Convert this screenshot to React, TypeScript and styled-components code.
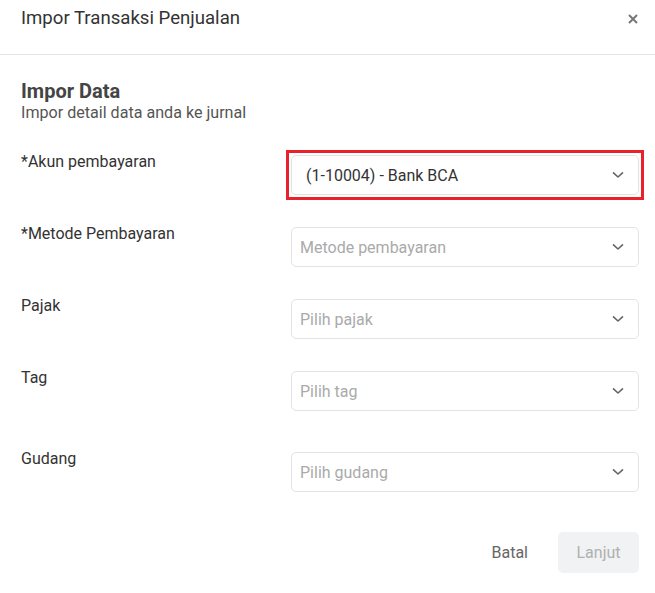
import React from "react";
import styled, { createGlobalStyle } from "styled-components";

const Global = createGlobalStyle`
  html, body { margin: 0; padding: 0; background: #ffffff; }
  body { font-family: Roboto, "Liberation Sans", Arial, sans-serif; color: #333; }
  * { box-sizing: border-box; }
`;

const Modal = styled.div`
  width: 655px;
  min-height: 593px;
  background: #fff;
  display: flex;
  flex-direction: column;
`;

const Header = styled.div`
  height: 55px;
  padding: 6px 15px 0 21px;
  border-bottom: 1px solid #e5e5e5;
  display: flex;
  align-items: flex-start;
  justify-content: space-between;
`;

const Title = styled.h1`
  margin: 0;
  font-size: 18.6px;
  line-height: 24px;
  font-weight: 400;
  color: #333;
`;

const CloseButton = styled.button`
  border: 0;
  background: transparent;
  padding: 0;
  margin-top: 6px;
  width: 14px;
  height: 14px;
  display: flex;
  align-items: center;
  justify-content: center;
  color: #777;
  cursor: pointer;
`;

const Body = styled.div`
  padding: 24px 16px 0 21px;
  display: flex;
  flex-direction: column;
`;

const SectionTitle = styled.h2`
  margin: 0;
  font-size: 20px;
  line-height: 24px;
  font-weight: 700;
  color: #444;
`;

const SectionSub = styled.p`
  margin: 0;
  font-size: 16.1px;
  line-height: 20px;
  color: #555;
`;

const Form = styled.div`
  margin-top: 32px;
  display: flex;
  flex-direction: column;
`;

const Row = styled.div<{ $gap: number }>`
  display: grid;
  grid-template-columns: 270px 1fr;
  align-items: start;
  margin-bottom: ${(p) => p.$gap}px;
`;

const Label = styled.label`
  font-size: 16px;
  line-height: 24px;
  margin-top: -5px;
  color: #333;
`;

const Highlight = styled.div`
  margin: -5px;
  padding: 2px;
  border: 3px solid #e8212b;
`;

const Select = styled.div<{ $filled?: boolean }>`
  height: 40px;
  border: 1px solid #e3e3e3;
  border-radius: 5px;
  display: flex;
  align-items: center;
  justify-content: space-between;
  padding: 0 14px 0 ${(p) => (p.$filled ? 14 : 8)}px;
  font-size: 16px;
  color: ${(p) => (p.$filled ? "#333" : "#aaa")};
  background: #fff;
`;

const Chevron = () => (
  <svg width="12" height="8" viewBox="0 0 12 8" fill="none">
    <path d="M1.5 1.8 L6 6 L10.5 1.8" stroke="#666" strokeWidth="1.6" strokeLinecap="round" strokeLinejoin="round" />
  </svg>
);

const Footer = styled.div`
  display: flex;
  justify-content: flex-end;
  align-items: center;
  gap: 14px;
`;

const GhostButton = styled.button`
  border: 0;
  background: transparent;
  font-family: inherit;
  font-size: 16px;
  color: #666;
  height: 41px;
  padding: 0 16px;
`;

const PrimaryButton = styled.button`
  border: 0;
  border-radius: 5px;
  background: #f1f2f4;
  font-family: inherit;
  font-size: 16px;
  color: #b0b0b0;
  height: 41px;
  width: 81px;
`;

type Field = { label: string; value: string; filled?: boolean; highlight?: boolean; gap: number };

const fields: Field[] = [
  { label: "*Akun pembayaran", value: "(1-10004) - Bank BCA", filled: true, highlight: true, gap: 32 },
  { label: "*Metode Pembayaran", value: "Metode pembayaran", gap: 32 },
  { label: "Pajak", value: "Pilih pajak", gap: 32 },
  { label: "Tag", value: "Pilih tag", gap: 41 },
  { label: "Gudang", value: "Pilih gudang", gap: 40 },
];

export default function App() {
  return (
    <>
      <Global />
      <Modal>
        <Header>
          <Title>Impor Transaksi Penjualan</Title>
          <CloseButton aria-label="close">
            <svg width="10" height="10" viewBox="0 0 10 10">
              <path d="M1 1 L9 9 M9 1 L1 9" stroke="#777" strokeWidth="2" />
            </svg>
          </CloseButton>
        </Header>
        <Body>
          <SectionTitle>Impor Data</SectionTitle>
          <SectionSub>Impor detail data anda ke jurnal</SectionSub>
          <Form>
            {fields.map((f) => {
              const select = (
                <Select $filled={f.filled}>
                  <span>{f.value}</span>
                  <Chevron />
                </Select>
              );
              return (
                <Row key={f.label} $gap={f.gap}>
                  <Label>{f.label}</Label>
                  {f.highlight ? <Highlight>{select}</Highlight> : select}
                </Row>
              );
            })}
          </Form>
          <Footer>
            <GhostButton>Batal</GhostButton>
            <PrimaryButton>Lanjut</PrimaryButton>
          </Footer>
        </Body>
      </Modal>
    </>
  );
}
